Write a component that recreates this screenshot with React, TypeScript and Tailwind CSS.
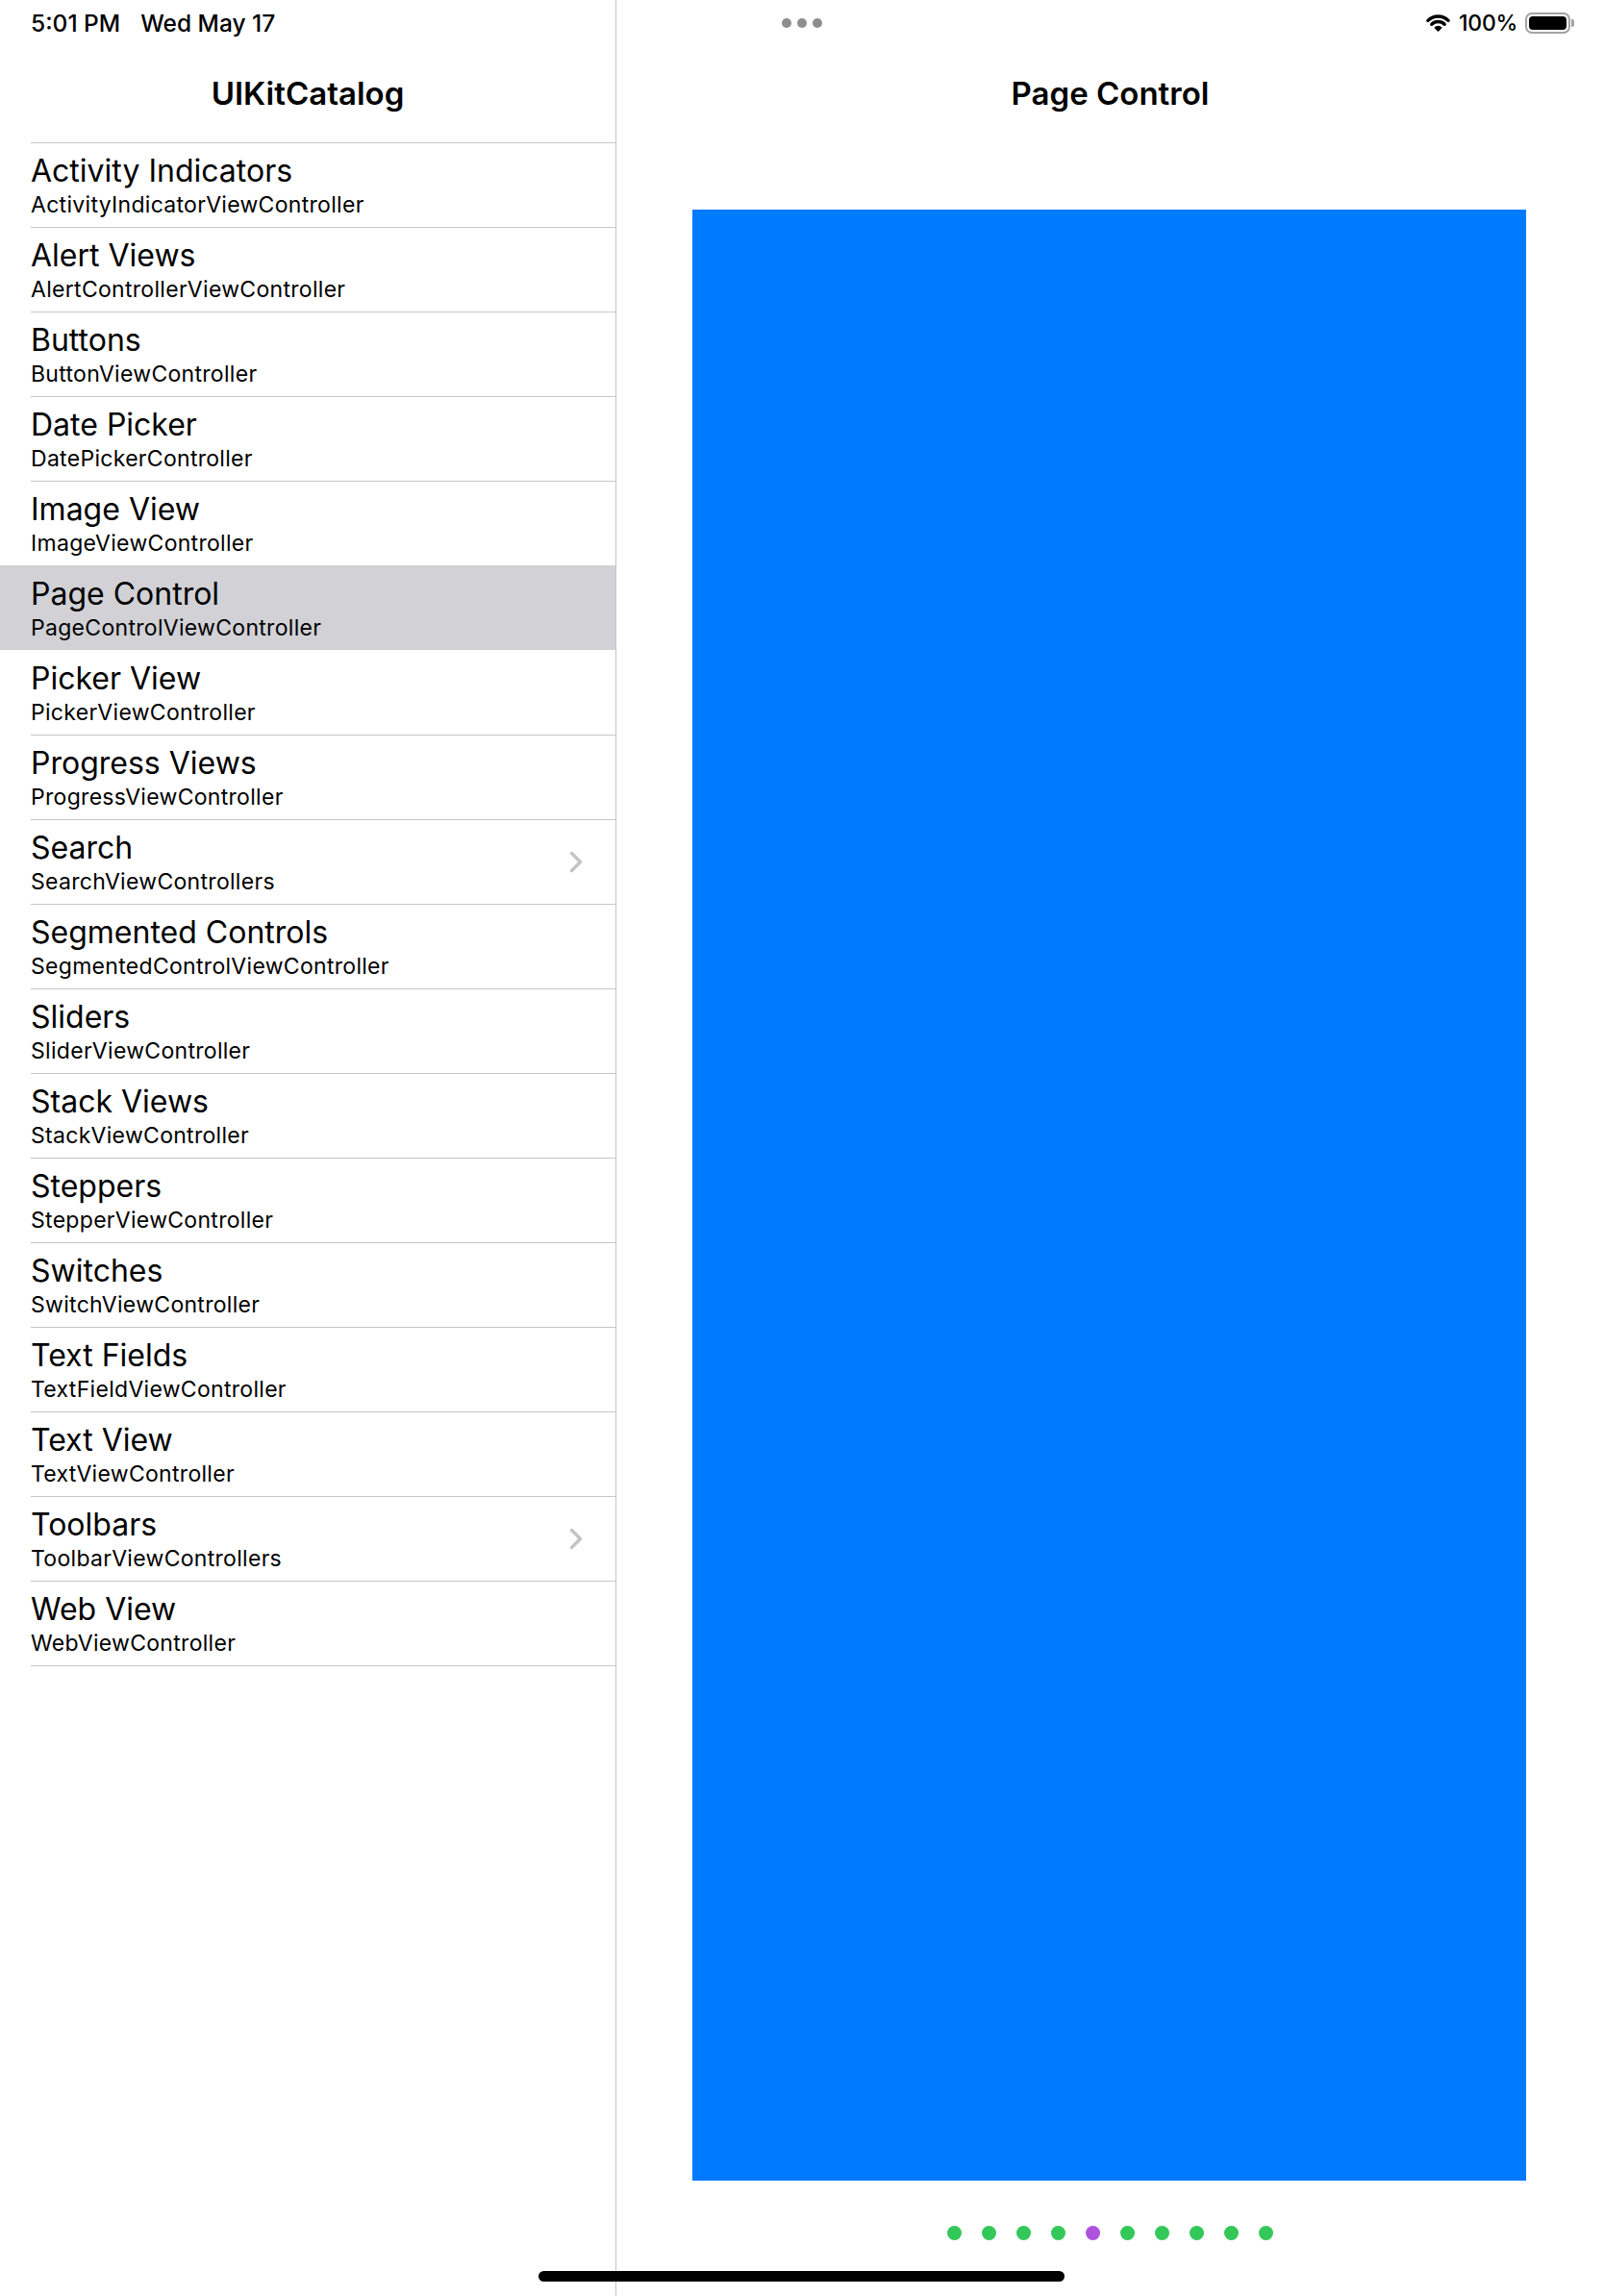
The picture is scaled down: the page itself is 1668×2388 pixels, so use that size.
import React from 'react';

const items = [
  { title: 'Activity Indicators', sub: 'ActivityIndicatorViewController' },
  { title: 'Alert Views', sub: 'AlertControllerViewController' },
  { title: 'Buttons', sub: 'ButtonViewController' },
  { title: 'Date Picker', sub: 'DatePickerController' },
  { title: 'Image View', sub: 'ImageViewController' },
  { title: 'Page Control', sub: 'PageControlViewController' },
  { title: 'Picker View', sub: 'PickerViewController' },
  { title: 'Progress Views', sub: 'ProgressViewController' },
  { title: 'Search', sub: 'SearchViewControllers', more: true },
  { title: 'Segmented Controls', sub: 'SegmentedControlViewController' },
  { title: 'Sliders', sub: 'SliderViewController' },
  { title: 'Stack Views', sub: 'StackViewController' },
  { title: 'Steppers', sub: 'StepperViewController' },
  { title: 'Switches', sub: 'SwitchViewController' },
  { title: 'Text Fields', sub: 'TextFieldViewController' },
  { title: 'Text View', sub: 'TextViewController' },
  { title: 'Toolbars', sub: 'ToolbarViewControllers', more: true },
  { title: 'Web View', sub: 'WebViewController' },
];

const SELECTED = 5;
const PAGES = 10;
const CURRENT_PAGE = 4;

const Wifi = () => (
  <svg width="27" height="20" viewBox="0 0 27 20">
    <path d="M2.9 7.4 A15 15 0 0 1 24.1 7.4" fill="none" stroke="#000" strokeWidth="3.4" strokeLinecap="round" />
    <path d="M6.8 11.3 A9.5 9.5 0 0 1 20.2 11.3" fill="none" stroke="#000" strokeWidth="3.4" strokeLinecap="round" />
    <path d="M13.5 18.5 L9.8 14.8 A5.2 5.2 0 0 1 17.2 14.8 Z" fill="#000" stroke="#000" strokeWidth="1" strokeLinejoin="round" />
  </svg>
);

const Battery = () => (
  <div className="flex items-center">
    <div className="w-[47px] h-[22px] rounded-[7px] border-2 border-[#a3a3a3] p-[2px]">
      <div className="w-full h-full rounded-[4px] bg-black" />
    </div>
    <div className="w-[3px] h-[8px] rounded-r-[2px] bg-[#a3a3a3] ml-[1px]" />
  </div>
);

const Chevron = () => (
  <svg width="14" height="23" viewBox="0 0 14 23">
    <polyline points="2.5,2.5 11.5,11.5 2.5,20.5" fill="none" stroke="#c4c4c7" strokeWidth="3.4" strokeLinecap="round" strokeLinejoin="round" />
  </svg>
);

const App = () => {
  return (
    <div className="w-[1668px] h-[2388px] relative bg-white flex overflow-hidden text-black font-['Inter','Liberation_Sans',sans-serif]">
      {/* Sidebar */}
      <div className="w-[641px] shrink-0 border-r border-[#c6c6c8] flex flex-col">
        <div className="h-[48px] flex items-center pl-[32px] gap-[21px] text-[24.5px] font-medium">
          <span>5:01 PM</span>
          <span>Wed May 17</span>
        </div>
        <div className="h-[100px] flex items-center justify-center text-[33px] font-semibold">
          UIKitCatalog
        </div>
        <div className="flex flex-col">
          {items.map((item, i) => {
            const selected = i === SELECTED;
            const hideSep = selected || i === SELECTED + 1;
            return (
              <div key={item.title} className={selected ? 'bg-[#d1d1d6]' : ''}>
                <div className={hideSep ? 'h-px ml-[32px]' : 'h-px ml-[32px] bg-[#c6c6c8]'} />
                <div className="h-[87px] flex items-center justify-between pl-[32px] pr-[34px]">
                  <div className="flex flex-col">
                    <span className="text-[32px] leading-[38px]">{item.title}</span>
                    <span className="text-[23px] leading-[28px] tracking-[0.3px] mt-[2px]">{item.sub}</span>
                  </div>
                  {item.more && <Chevron />}
                </div>
              </div>
            );
          })}
          <div className="h-px ml-[32px] bg-[#c6c6c8]" />
        </div>
      </div>

      {/* Detail */}
      <div className="flex-1 flex flex-col">
        <div className="h-[48px] flex items-center justify-between pl-[172px] pr-[31px]">
          <div className="flex items-center gap-[6px]">
            <div className="w-[10px] h-[10px] rounded-full bg-[#8e8e8e]" />
            <div className="w-[10px] h-[10px] rounded-full bg-[#8e8e8e]" />
            <div className="w-[10px] h-[10px] rounded-full bg-[#8e8e8e]" />
          </div>
          <div className="flex items-center gap-[8px]">
            <Wifi />
            <span className="text-[23px] font-medium tracking-[-0.3px]">100%</span>
            <Battery />
          </div>
        </div>
        <div className="h-[100px] flex items-center justify-center text-[33px] font-semibold">
          Page Control
        </div>
        <div className="mt-[70px] ml-[79px] w-[867px] h-[2050px] bg-[#007aff]" />
        <div className="mt-[47px] flex justify-center gap-[21px]">
          {Array.from({ length: PAGES }).map((_, i) => (
            <div
              key={i}
              className={i === CURRENT_PAGE ? 'w-[15px] h-[15px] rounded-full bg-[#af52de]' : 'w-[15px] h-[15px] rounded-full bg-[#34c759]'}
            />
          ))}
        </div>
      </div>

      {/* Home indicator */}
      <div className="absolute left-[560px] top-[2362px] w-[547px] h-[11px] rounded-full bg-black" />
    </div>
  );
};

export default App;
